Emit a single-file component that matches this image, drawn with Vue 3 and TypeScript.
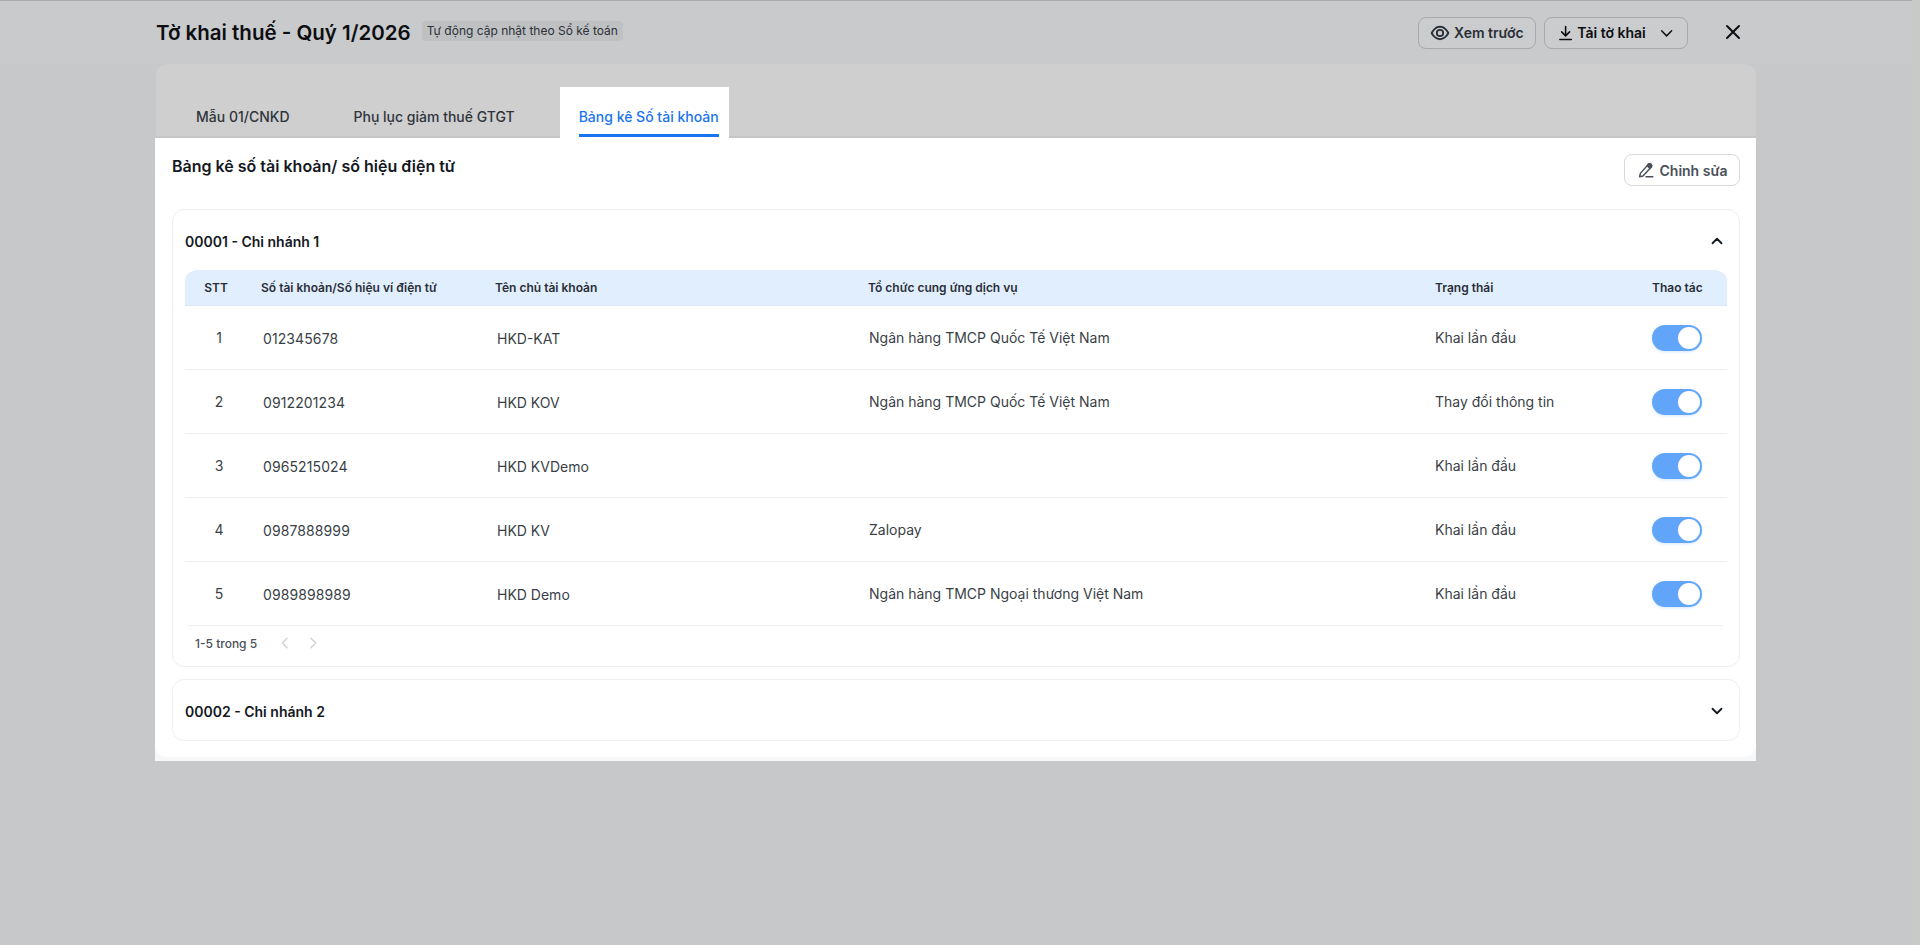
<template>
  <div class="page">
    <div class="scroll-track"></div>
    <header class="topbar">
      <div class="title-wrap">
        <h1 class="title">Tờ khai thuế - Quý 1/2026</h1>
        <span class="badge">Tự động cập nhật theo Sổ kế toán</span>
      </div>
      <div class="actions">
        <button class="btn btn-preview">
          <svg width="20" height="20" viewBox="0 0 24 24" fill="none" stroke="currentColor" stroke-width="2.2" stroke-linecap="round" stroke-linejoin="round">
            <path d="M2 12s3.600-7.500 10-7.500S22 12 22 12s-3.600 7.500-10 7.500S2 12 2 12Z" />
            <circle cx="12" cy="12" r="3.800" />
          </svg>
          Xem trước
        </button>
        <button class="btn btn-download">
          <svg width="20" height="20" viewBox="0 0 24 24" fill="none" stroke="currentColor" stroke-width="2.2" stroke-linecap="round" stroke-linejoin="round">
            <path d="M12 3v13M6.500 10.500 12 16l5.500-5.500M4 21h16" />
          </svg>
          Tải tờ khai
          <svg class="caret" width="20" height="20" viewBox="0 0 24 24" fill="none" stroke="currentColor" stroke-width="2" stroke-linecap="round" stroke-linejoin="round">
            <path d="m5 9 7 7 7-7" />
          </svg>
        </button>
        <button class="close" aria-label="Đóng">
          <svg width="24" height="24" viewBox="0 0 24 24" fill="none" stroke="currentColor" stroke-width="2" stroke-linecap="round">
            <path d="M6 6l12 12M18 6 6 18" />
          </svg>
        </button>
      </div>
    </header>

    <main class="sheet">
      <nav class="tabs">
        <a v-for="(tab, i) in tabs" :key="tab" class="tab" :class="{ active: i === activeTab }">
          <span class="tab-label">{{ tab }}</span>
        </a>
      </nav>

      <div class="body-wrap">
        <section class="body">
          <div class="body-head">
            <h2 class="heading">Bảng kê số tài khoản/ số hiệu điện tử</h2>
            <button class="btn-edit">
              <svg width="18" height="18" viewBox="0 0 24 24" fill="none" stroke="currentColor" stroke-width="2" stroke-linecap="round" stroke-linejoin="round">
                <path d="M4.500 16.500 15 4.500a2.700 2.700 0 0 1 4 3.600L8 20l-4.500 1ZM12 21h9" />
                <path d="M15 4.500a2.700 2.700 0 0 1 4 3.600l-1.500 1.700-4-3.600Z" fill="currentColor" />
              </svg>
              Chỉnh sửa
            </button>
          </div>

          <div class="branch">
            <div class="branch-head">
              <span>00001 - Chi nhánh 1</span>
              <svg width="18" height="18" viewBox="0 0 24 24" fill="none" stroke="currentColor" stroke-width="2.4" stroke-linecap="round" stroke-linejoin="round">
                <path d="m6 15 6-6 6 6" />
              </svg>
            </div>

            <div class="table">
              <div class="tr th">
                <div class="c-stt">STT</div>
                <div>Số tài khoản/Số hiệu ví điện tử</div>
                <div>Tên chủ tài khoản</div>
                <div>Tổ chức cung ứng dịch vụ</div>
                <div>Trạng thái</div>
                <div>Thao tác</div>
              </div>
              <div v-for="(row, i) in rows" :key="row.account" class="tr td">
                <div class="c-num">{{ i + 1 }}</div>
                <div class="c-val c-account">{{ row.account }}</div>
                <div class="c-val">{{ row.owner }}</div>
                <div class="c-org">{{ row.org }}</div>
                <div>{{ row.status }}</div>
                <div><span class="toggle"><span class="knob"></span></span></div>
              </div>
            </div>

            <div class="pager">
              <span>1-5 trong 5</span>
              <svg width="16" height="16" viewBox="0 0 24 24" fill="none" stroke="currentColor" stroke-width="2.4" stroke-linecap="round" stroke-linejoin="round">
                <path d="m15 5-7 7 7 7" />
              </svg>
              <svg width="16" height="16" viewBox="0 0 24 24" fill="none" stroke="currentColor" stroke-width="2.4" stroke-linecap="round" stroke-linejoin="round">
                <path d="m9 5 7 7-7 7" />
              </svg>
            </div>
          </div>

          <div class="branch branch-closed">
            <div class="branch-head">
              <span>00002 - Chi nhánh 2</span>
              <svg width="18" height="18" viewBox="0 0 24 24" fill="none" stroke="currentColor" stroke-width="2.4" stroke-linecap="round" stroke-linejoin="round">
                <path d="m6 9 6 6 6-6" />
              </svg>
            </div>
          </div>
        </section>
      </div>
    </main>
  </div>
</template>

<script setup lang="ts">
interface AccountRow {
  account: string
  owner: string
  org: string
  status: string
}

const tabs = ['Mẫu 01/CNKD', 'Phụ lục giảm thuế GTGT', 'Bảng kê Số tài khoản']
const activeTab = 2

const rows: AccountRow[] = [
  { account: '012345678', owner: 'HKD-KAT', org: 'Ngân hàng TMCP Quốc Tế Việt Nam', status: 'Khai lần đầu' },
  { account: '0912201234', owner: 'HKD KOV', org: 'Ngân hàng TMCP Quốc Tế Việt Nam', status: 'Thay đổi thông tin' },
  { account: '0965215024', owner: 'HKD KVDemo', org: '', status: 'Khai lần đầu' },
  { account: '0987888999', owner: 'HKD KV', org: 'Zalopay', status: 'Khai lần đầu' },
  { account: '0989898989', owner: 'HKD Demo', org: 'Ngân hàng TMCP Ngoại thương Việt Nam', status: 'Khai lần đầu' },
]
</script>

<style>
html,
body {
  margin: 0;
  background: #c7c8ca;
}
</style>

<style scoped>
.page {
  position: relative;
  min-height: 945px;
  box-sizing: border-box;
  border-top: 1px solid #a9abae;
  background: #c7c8ca;
  font-family: Inter, "Noto Sans", sans-serif;
  color: #14181f;
}

.scroll-track {
  position: absolute;
  top: -1px;
  right: 0;
  bottom: 0;
  width: 8px;
  background: #c9c9c8;
}

.topbar {
  height: 63px;
  box-sizing: border-box;
  padding: 0 175px 0 156px;
  display: flex;
  align-items: center;
  justify-content: space-between;
  background: #c9cacc;
}

.title-wrap {
  display: flex;
  align-items: center;
  gap: 11px;
  margin-top: 1px;
}

.title {
  margin: 0;
  font-size: 20.5px;
  line-height: 30px;
  font-weight: 600;
  color: #0c0e12;
}

.badge {
  margin-top: -5px;
  padding: 0 5px;
  height: 20px;
  line-height: 20px;
  border-radius: 4px;
  background: #bfc0c2;
  font-size: 12px;
  color: #2c3138;
}

.actions {
  display: flex;
  align-items: center;
}

.btn {
  height: 32px;
  box-sizing: border-box;
  display: inline-flex;
  align-items: center;
  gap: 4px;
  border: 1px solid #a7a9ad;
  border-radius: 8px;
  background: #cbcccd;
  font: 600 14px Inter, sans-serif;
  white-space: nowrap;
  color: #1d2128;
  padding: 0 11px;
}

.btn-preview {
  width: 118px;
  color: #2a2f37;
}

.btn-download {
  width: 144px;
  margin-left: 8px;
  padding: 0 12px;
  gap: 3px;
  color: #0c0e12;
}

.caret {
  margin-left: 9px;
}

.close {
  width: 24px;
  height: 24px;
  padding: 0;
  margin: -2px 0 0 33px;
  border: 0;
  background: none;
  color: #0c0e12;
}

.sheet {
  width: 1601px;
  margin-left: 155px;
}

.tabs {
  height: 74px;
  box-sizing: border-box;
  margin-left: 1px;
  padding: 23px 0 0 21px;
  display: flex;
  gap: 35px;
  background: #cfcfcf;
  border-radius: 12px 12px 0 0;
  border-bottom: 2px solid #c6c6c6;
}

.tab {
  box-sizing: border-box;
  height: 51px;
  padding: 0 10px 0 19px;
  font-size: 14px;
  font-weight: 500;
  line-height: 18px;
  color: #30353c;
}

.tab-label {
  display: block;
  height: 50px;
  box-sizing: border-box;
  padding-top: 21px;
}

.tab.active {
  background: #fff;
  color: #1a73f0;
}

.tab.active .tab-label {
  border-bottom: 3px solid #1a73f0;
}

.body-wrap {
  padding-bottom: 4px;
  background: #f7f8f9;
}

.body {
  height: 619px;
  box-sizing: border-box;
  padding: 16px 16px 0 17px;
  background: #fff;
  border-radius: 0 0 12px 12px;
}

.body-head {
  display: flex;
  justify-content: space-between;
  align-items: flex-start;
  height: 55px;
}

.heading {
  margin: -1px 0 0;
  font-size: 16px;
  line-height: 26px;
  font-weight: 600;
  color: #14181f;
}

.btn-edit {
  width: 116px;
  height: 32px;
  box-sizing: border-box;
  display: inline-flex;
  align-items: center;
  justify-content: center;
  gap: 5px;
  border: 1px solid #d5d8dd;
  border-radius: 8px;
  background: #fff;
  font: 600 14px Inter, sans-serif;
  color: #4a505a;
  padding: 0;
}

.branch {
  height: 458px;
  box-sizing: border-box;
  border: 1px solid #eceef0;
  border-radius: 12px;
  padding: 0 12px;
}

.branch-closed {
  height: 62px;
  margin-top: 12px;
}

.branch-head {
  height: 60px;
  box-sizing: border-box;
  padding: 2px 1px 0 0;
  display: flex;
  align-items: center;
  justify-content: space-between;
  font-size: 14px;
  font-weight: 600;
  color: #14181f;
}

.tr {
  display: grid;
  grid-template-columns: 68px 234px 373px 567px 217px 83px;
  align-items: center;
}

.tr > div {
  padding-left: 8px;
}

.th {
  height: 36px;
  background: #e1eefe;
  border-radius: 12px 12px 0 0;
  border-bottom: 1px solid #dbe8fa;
  box-sizing: border-box;
  font-size: 12px;
  font-weight: 600;
  color: #2a2f37;
}

.td {
  height: 64px;
  box-sizing: border-box;
  border-bottom: 1px solid #eff0f2;
  font-size: 14px;
  color: #3a3f47;
}

.td:last-child {
  height: 63px;
  border-bottom: 0;
}

.tr .c-stt {
  padding-left: 0;
  padding-right: 6px;
  text-align: center;
}

.tr .c-num {
  padding-left: 0;
  text-align: center;
}

.tr .c-val {
  padding-left: 10px;
  padding-top: 2px;
}

.tr .c-account {
  letter-spacing: 0.1px;
}

.tr .c-org {
  padding-left: 9px;
}

.toggle {
  display: block;
  position: relative;
  width: 50px;
  height: 26px;
  border-radius: 13px;
  background: #60a5fa;
  box-shadow: 0 1px 3px rgba(96, 165, 250, 0.25);
}

.knob {
  position: absolute;
  top: 2px;
  right: 2px;
  width: 22px;
  height: 22px;
  border-radius: 50%;
  background: #fff;
}

.pager {
  height: 35px;
  margin: 0 4px 0 3px;
  box-sizing: border-box;
  border-top: 1px solid #eff0f2;
  display: flex;
  align-items: center;
  font-size: 12px;
  font-weight: 500;
  color: #4a505a;
  padding-left: 7px;
}

.pager svg {
  color: #d3d6da;
  margin-left: 12px;
}

.pager svg:first-of-type {
  margin-left: 20px;
}
</style>
